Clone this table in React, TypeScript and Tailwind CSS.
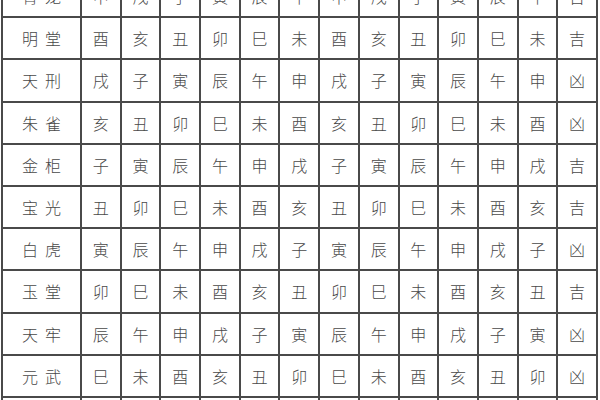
import React from 'react';

const branches = ['子', '丑', '寅', '卯', '辰', '巳', '午', '未', '申', '酉', '戌', '亥'];

// name, starting branch index, luck
const gods: [string, number, string][] = [
  ['青龙', 8, '吉'],
  ['明堂', 9, '吉'],
  ['天刑', 10, '凶'],
  ['朱雀', 11, '凶'],
  ['金柜', 0, '吉'],
  ['宝光', 1, '吉'],
  ['白虎', 2, '凶'],
  ['玉堂', 3, '吉'],
  ['天牢', 4, '凶'],
  ['元武', 5, '凶'],
  ['司命', 6, '吉'],
];

const cell = 'border-2 border-[#4a4a4a] text-center align-middle p-0';

const App = () => {
  return (
    <div className="w-[600px] h-[400px] overflow-hidden bg-white">
      <table
        className="border-collapse table-fixed w-[597px] ml-[1px] mt-[-26px] text-[16px] font-light text-[#484848]"
        style={{ fontFamily: '"Noto Sans CJK SC", "Noto Sans", sans-serif' }}
      >
        <colgroup>
          <col className="w-[79px]" />
          {Array.from({ length: 13 }).map((_, i) => (
            <col key={i} />
          ))}
        </colgroup>
        <tbody>
          {gods.map(([name, start, luck]) => (
            <tr key={name} className="h-[42.2px]">
              <td className={cell}>
                <span className="tracking-[7px] pl-[7px]">{name}</span>
              </td>
              {Array.from({ length: 12 }).map((_, i) => (
                <td key={i} className={cell}>
                  {branches[(start + i * 2) % 12]}
                </td>
              ))}
              <td className={cell}>{luck}</td>
            </tr>
          ))}
        </tbody>
      </table>
    </div>
  );
};

export default App;
